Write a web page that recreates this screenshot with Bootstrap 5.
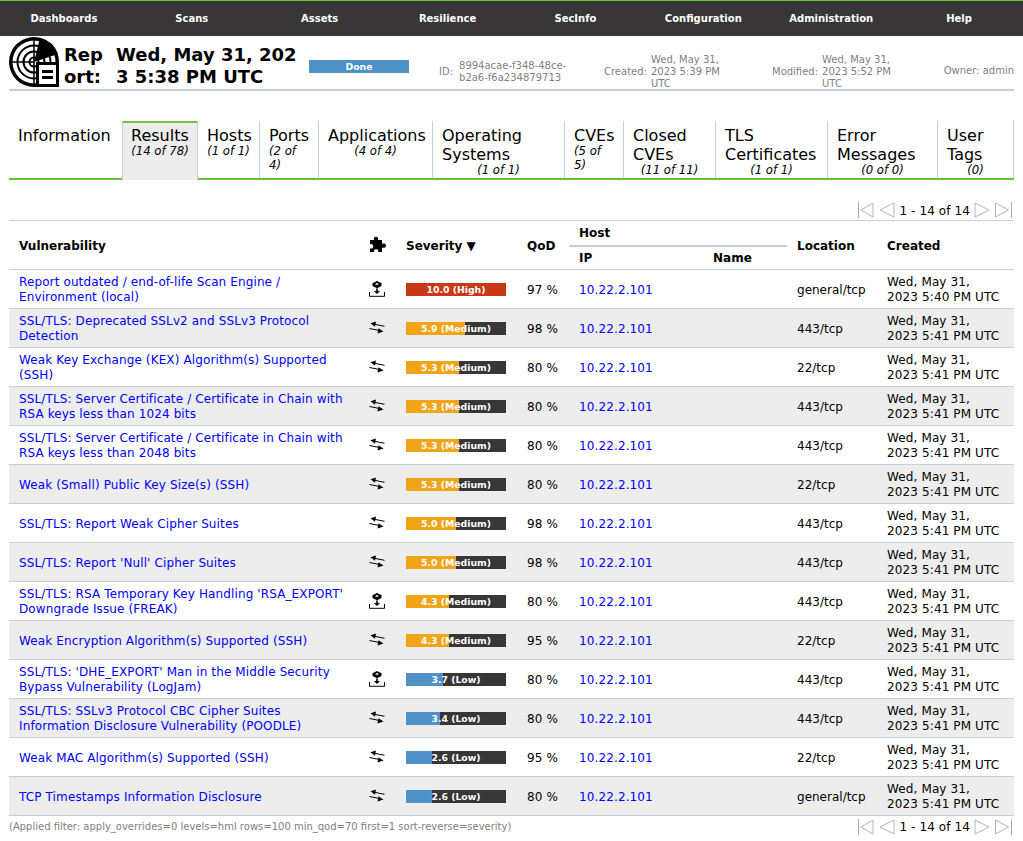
<!DOCTYPE html>
<html lang="en">
<head>
<meta charset="utf-8">
<title>Report</title>
<link href="https://cdn.jsdelivr.net/npm/bootstrap@5.3.0/dist/css/bootstrap.min.css" rel="stylesheet">
<style>
body{font-family:"DejaVu Sans",Verdana,sans-serif;font-size:12px;line-height:15px;color:#000;background:#fff;margin:0}
a{color:#00f;text-decoration:none}
.topbar{background:#393637;border-top:1px solid #66c430;height:36px}
.topbar a{flex:1 1 0;text-align:center;color:#fff;font-weight:700;font-size:10px;line-height:35px}
.page{padding:0 9px}
.headrow{height:55px;border-bottom:2px solid #c5d0d8}
.radar{width:50px;height:50px;flex:none;margin:1px 5px 0 0;display:block}
.ttl{font-size:18px;line-height:22px;font-weight:700;padding-top:8px}
.ttl-a{width:52px}.ttl-b{width:193px}
.donebar{width:100px;height:13px;margin-top:24px;background:#4f91c7;color:#fff;font-weight:700;font-size:9.3px;line-height:13px;text-align:center}
.meta{color:#7f7f7f;font-size:10px;line-height:12px;margin-top:18px;height:36px;align-items:center}
.m-id{margin-left:30px;width:165px}
.m-lab{margin-right:4px;white-space:nowrap}
.m-lab-id{margin-right:6px}
.m-created{width:168px}
.m-mod{width:120px}
.m-date{width:76px}
.m-own{margin-left:auto;margin-top:17px}
.tabbar{margin-top:30px;border-bottom:2px solid #66c430;height:59px}
.tabi{padding:5px 9px 0;border-right:1px solid #c5d0d8;font-size:16px;line-height:19px;color:#000}
.tabi small{display:block;font-size:11.7px;line-height:14px;margin-top:-1px;font-style:italic;text-align:center;color:#000}
.tabi small.lft{text-align:left}
.tabi.on{background:#ededed;border-top:2px solid #7ac143;border-left:1px solid #c5d0d8;margin-bottom:-2px;padding:3px 8px 0}
.t1{width:113px;border-right:0}
.t2{width:76px}.t3{width:62px}.t4{width:59px}.t5{width:114px}.t6{width:132px}.t7{width:59px}.t8{width:92px}.t9{width:112px}.t10{width:110px}.t11{width:76px}
.pager{height:40px;padding:20px 2px 0 0;gap:3px;line-height:20px}
.pager svg{display:block}
.pager span{letter-spacing:.1px;padding-top:1px}
.vt{table-layout:fixed;width:1005px;margin:0;--bs-table-bg:transparent;--bs-table-border-color:#c5d0d8;border-top:1px solid #c5d0d8}
.vt th,.vt td{padding:2px 0 0 10px;vertical-align:middle;font-size:12px;line-height:15px;border-bottom:1px solid #c5d0d8;color:#000;box-shadow:none}
.vt td{letter-spacing:.12px}
.vt td:first-child{padding-right:10px}
.vt td:last-child{padding-right:13px}
.vt td:nth-child(7){letter-spacing:0}
.vt tbody td{height:39px}
.vt thead th{height:24px;font-weight:700}
.vt thead tr:first-child .hosth{border-bottom:2px solid #c5d0d8;height:25px}
.vt tbody tr:nth-child(even) td{background:#ededed}
.vt td a{color:#00f}
.c-v{width:350px}.c-i{width:37px}.c-s{width:121px}.c-q{width:52px}.c-ip{width:134px}.c-n{width:84px}.c-l{width:90px}.c-c{width:137px}
.vt th.ic,.vt td.ic{padding:0 0 0 10px}
.vt td.sevc{padding-top:0}
.ic svg{display:block}
.sev{position:relative;width:100px;height:13px;background:#393637;color:#fff;font-weight:700;font-size:9.3px;line-height:13px;text-align:center;letter-spacing:0}
.sev i{position:absolute;left:0;top:0;bottom:0;display:block}
.sev b{position:relative;font-weight:700}
.hi{background:#c83814}.me{background:#f0a519}.lo{background:#4f91c7}
.footrow{height:20px}
.filt{color:#7f7f7f;font-size:10px;line-height:22px;white-space:nowrap}
.footrow .pager{height:20px;padding-top:1px}
</style>
</head>
<body>
<svg width="0" height="0" class="position-absolute">
<defs>
<symbol id="i-inst" viewBox="0 0 16 16"><path d="M8 0 12.500 2.200V5L8 7.200 3.500 5V2.200Z" fill="#000"/><path d="M8 2 10 3 8 4 6 3Z" fill="#fff"/><path d="M7.200 7.500h1.600v2.500h2.200L8 13 5 10h2.200Z" fill="#000"/><path d="M.5 11v4.300h15V11" fill="none" stroke="#000"/></symbol>
<symbol id="i-sw" viewBox="0 0 16 16"><path d="M5 4.200 15.500 6.300" fill="none" stroke="#000"/><path d="M1.500 3.200 7 1.500 6 6.800Z" fill="#000"/><path d="M.5 8.500 11 10.600" fill="none" stroke="#000"/><path d="M14.500 11.500 9.500 8.200 8.500 13.500Z" fill="#000"/></symbol>
<symbol id="p-first" viewBox="0 0 18 18"><path d="M1.500 1v16" stroke="#aaa" fill="none"/><path d="M16 2 4 9l12 7z" fill="#fff" stroke="#b5b5b5"/></symbol>
<symbol id="p-prev" viewBox="0 0 18 18"><path d="M16 2 2 9l14 7z" fill="#fff" stroke="#b5b5b5"/></symbol>
<symbol id="p-next" viewBox="0 0 18 18"><path d="M2 2l14 7-14 7z" fill="#fff" stroke="#b5b5b5"/></symbol>
<symbol id="p-last" viewBox="0 0 18 18"><path d="M1.500 2l13 7-13 7z" fill="#fff" stroke="#b5b5b5"/><path d="M17.500 1v16" stroke="#aaa" fill="none"/></symbol>
</defs>
</svg>

<nav class="topbar d-flex">
<a href="#">Dashboards</a><a href="#">Scans</a><a href="#">Assets</a><a href="#">Resilience</a><a href="#">SecInfo</a><a href="#">Configuration</a><a href="#">Administration</a><a href="#">Help</a>
</nav>

<div class="page">
<div class="headrow d-flex">
<svg class="radar" viewBox="0 0 50 50">
<circle cx="25" cy="25" r="25" fill="#000"/>
<circle cx="25" cy="25" r="21.500" fill="#fff"/>
<circle cx="25" cy="25" r="16.500" fill="none" stroke="#000" stroke-width="2"/>
<circle cx="25" cy="25" r="10.500" fill="none" stroke="#000" stroke-width="2"/>
<circle cx="25" cy="25" r="4.500" fill="none" stroke="#000" stroke-width="2"/>
<path d="M25 3v44M3 25h22" stroke="#000" stroke-width="1.500"/>
<path d="M25 25 31 1A25 25 0 0 1 49 17Z" fill="#000"/>
<rect x="27" y="25" width="23" height="25" fill="#000"/>
<rect x="30" y="28" width="17" height="19" fill="#fff"/>
<rect x="33" y="33" width="11" height="3" fill="#000"/>
<rect x="33" y="39" width="11" height="3" fill="#000"/>
</svg>
<div class="ttl ttl-a">Rep<br>ort:</div>
<div class="ttl ttl-b">Wed, May 31, 202<br>3 5:38 PM UTC</div>
<div class="donebar">Done</div>
<div class="meta m-id d-flex"><span class="m-lab m-lab-id">ID:</span><span>8994acae-f348-48ce-<br>b2a6-f6a234879713</span></div>
<div class="meta m-created d-flex"><span class="m-lab">Created:</span><span class="m-date">Wed, May 31,<br>2023 5:39 PM<br>UTC</span></div>
<div class="meta m-mod d-flex"><span class="m-lab">Modified:</span><span class="m-date">Wed, May 31,<br>2023 5:52 PM<br>UTC</span></div>
<div class="meta m-own d-flex">Owner: admin</div>
</div>

<div class="tabbar d-flex">
<a class="tabi t1">Information</a>
<a class="tabi t2 on">Results<small>(14 of 78)</small></a>
<a class="tabi t3">Hosts<small>(1 of 1)</small></a>
<a class="tabi t4">Ports<small class="lft">(2 of<br>4)</small></a>
<a class="tabi t5">Applications<small>(4 of 4)</small></a>
<a class="tabi t6">Operating Systems<small>(1 of 1)</small></a>
<a class="tabi t7">CVEs<small class="lft">(5 of<br>5)</small></a>
<a class="tabi t8">Closed CVEs<small>(11 of 11)</small></a>
<a class="tabi t9">TLS Certificates<small>(1 of 1)</small></a>
<a class="tabi t10">Error Messages<small>(0 of 0)</small></a>
<a class="tabi t11">User Tags<small>(0)</small></a>
</div>

<div class="pager d-flex justify-content-end align-items-center">
<svg width="18" height="18"><use href="#p-first"/></svg><svg width="18" height="18"><use href="#p-prev"/></svg><span>1 - 14 of 14</span><svg width="18" height="18"><use href="#p-next"/></svg><svg width="18" height="18"><use href="#p-last"/></svg>
</div>

<table class="table vt">
<colgroup><col class="c-v"><col class="c-i"><col class="c-s"><col class="c-q"><col class="c-ip"><col class="c-n"><col class="c-l"><col class="c-c"></colgroup>
<thead>
<tr><th rowspan="2">Vulnerability</th>
<th rowspan="2" class="ic"><svg width="18" height="18" viewBox="0 0 18 18"><path d="M1 4h4.200C4.500 2.500 5 .7 7 .7s2.500 1.800 1.800 3.300H13v4c1.500-.8 4-.4 4 1.700s-2.500 2.500-4 1.700V16H9c.7-1.500.2-2.800-1.800-2.800S4.600 14.500 5.300 16H1v-3.800c1.500.7 3.200.3 3.200-1.800S2.500 7.600 1 8.300Z" fill="#000"/></svg></th>
<th rowspan="2">Severity ▼</th><th rowspan="2">QoD</th><th colspan="2" class="hosth">Host</th><th rowspan="2">Location</th><th rowspan="2">Created</th></tr>
<tr><th>IP</th><th>Name</th></tr>
</thead>
<tbody>
<tr><td><a href="#">Report outdated / end-of-life Scan Engine / Environment (local)</a></td><td class="ic"><svg width="16" height="16"><use href="#i-inst"/></svg></td><td class="sevc"><div class="sev"><i class="hi" style="width:100%"></i><b>10.0 (High)</b></div></td><td>97 %</td><td><a href="#">10.22.2.101</a></td><td></td><td>general/tcp</td><td>Wed, May 31, 2023 5:40 PM UTC</td></tr>
<tr><td><a href="#">SSL/TLS: Deprecated SSLv2 and SSLv3 Protocol Detection</a></td><td class="ic"><svg width="16" height="16"><use href="#i-sw"/></svg></td><td class="sevc"><div class="sev"><i class="me" style="width:59%"></i><b>5.9 (Medium)</b></div></td><td>98 %</td><td><a href="#">10.22.2.101</a></td><td></td><td>443/tcp</td><td>Wed, May 31, 2023 5:41 PM UTC</td></tr>
<tr><td><a href="#">Weak Key Exchange (KEX) Algorithm(s) Supported (SSH)</a></td><td class="ic"><svg width="16" height="16"><use href="#i-sw"/></svg></td><td class="sevc"><div class="sev"><i class="me" style="width:53%"></i><b>5.3 (Medium)</b></div></td><td>80 %</td><td><a href="#">10.22.2.101</a></td><td></td><td>22/tcp</td><td>Wed, May 31, 2023 5:41 PM UTC</td></tr>
<tr><td><a href="#">SSL/TLS: Server Certificate / Certificate in Chain with RSA keys less than 1024 bits</a></td><td class="ic"><svg width="16" height="16"><use href="#i-sw"/></svg></td><td class="sevc"><div class="sev"><i class="me" style="width:53%"></i><b>5.3 (Medium)</b></div></td><td>80 %</td><td><a href="#">10.22.2.101</a></td><td></td><td>443/tcp</td><td>Wed, May 31, 2023 5:41 PM UTC</td></tr>
<tr><td><a href="#">SSL/TLS: Server Certificate / Certificate in Chain with RSA keys less than 2048 bits</a></td><td class="ic"><svg width="16" height="16"><use href="#i-sw"/></svg></td><td class="sevc"><div class="sev"><i class="me" style="width:53%"></i><b>5.3 (Medium)</b></div></td><td>80 %</td><td><a href="#">10.22.2.101</a></td><td></td><td>443/tcp</td><td>Wed, May 31, 2023 5:41 PM UTC</td></tr>
<tr><td><a href="#">Weak (Small) Public Key Size(s) (SSH)</a></td><td class="ic"><svg width="16" height="16"><use href="#i-sw"/></svg></td><td class="sevc"><div class="sev"><i class="me" style="width:53%"></i><b>5.3 (Medium)</b></div></td><td>80 %</td><td><a href="#">10.22.2.101</a></td><td></td><td>22/tcp</td><td>Wed, May 31, 2023 5:41 PM UTC</td></tr>
<tr><td><a href="#">SSL/TLS: Report Weak Cipher Suites</a></td><td class="ic"><svg width="16" height="16"><use href="#i-sw"/></svg></td><td class="sevc"><div class="sev"><i class="me" style="width:50%"></i><b>5.0 (Medium)</b></div></td><td>98 %</td><td><a href="#">10.22.2.101</a></td><td></td><td>443/tcp</td><td>Wed, May 31, 2023 5:41 PM UTC</td></tr>
<tr><td><a href="#">SSL/TLS: Report 'Null' Cipher Suites</a></td><td class="ic"><svg width="16" height="16"><use href="#i-sw"/></svg></td><td class="sevc"><div class="sev"><i class="me" style="width:50%"></i><b>5.0 (Medium)</b></div></td><td>98 %</td><td><a href="#">10.22.2.101</a></td><td></td><td>443/tcp</td><td>Wed, May 31, 2023 5:41 PM UTC</td></tr>
<tr><td><a href="#">SSL/TLS: RSA Temporary Key Handling 'RSA_EXPORT' Downgrade Issue (FREAK)</a></td><td class="ic"><svg width="16" height="16"><use href="#i-inst"/></svg></td><td class="sevc"><div class="sev"><i class="me" style="width:43%"></i><b>4.3 (Medium)</b></div></td><td>80 %</td><td><a href="#">10.22.2.101</a></td><td></td><td>443/tcp</td><td>Wed, May 31, 2023 5:41 PM UTC</td></tr>
<tr><td><a href="#">Weak Encryption Algorithm(s) Supported (SSH)</a></td><td class="ic"><svg width="16" height="16"><use href="#i-sw"/></svg></td><td class="sevc"><div class="sev"><i class="me" style="width:43%"></i><b>4.3 (Medium)</b></div></td><td>95 %</td><td><a href="#">10.22.2.101</a></td><td></td><td>22/tcp</td><td>Wed, May 31, 2023 5:41 PM UTC</td></tr>
<tr><td><a href="#">SSL/TLS: 'DHE_EXPORT' Man in the Middle Security Bypass Vulnerability (LogJam)</a></td><td class="ic"><svg width="16" height="16"><use href="#i-inst"/></svg></td><td class="sevc"><div class="sev"><i class="lo" style="width:37%"></i><b>3.7 (Low)</b></div></td><td>80 %</td><td><a href="#">10.22.2.101</a></td><td></td><td>443/tcp</td><td>Wed, May 31, 2023 5:41 PM UTC</td></tr>
<tr><td><a href="#">SSL/TLS: SSLv3 Protocol CBC Cipher Suites Information Disclosure Vulnerability (POODLE)</a></td><td class="ic"><svg width="16" height="16"><use href="#i-sw"/></svg></td><td class="sevc"><div class="sev"><i class="lo" style="width:34%"></i><b>3.4 (Low)</b></div></td><td>80 %</td><td><a href="#">10.22.2.101</a></td><td></td><td>443/tcp</td><td>Wed, May 31, 2023 5:41 PM UTC</td></tr>
<tr><td><a href="#">Weak MAC Algorithm(s) Supported (SSH)</a></td><td class="ic"><svg width="16" height="16"><use href="#i-sw"/></svg></td><td class="sevc"><div class="sev"><i class="lo" style="width:26%"></i><b>2.6 (Low)</b></div></td><td>95 %</td><td><a href="#">10.22.2.101</a></td><td></td><td>22/tcp</td><td>Wed, May 31, 2023 5:41 PM UTC</td></tr>
<tr><td><a href="#">TCP Timestamps Information Disclosure</a></td><td class="ic"><svg width="16" height="16"><use href="#i-sw"/></svg></td><td class="sevc"><div class="sev"><i class="lo" style="width:26%"></i><b>2.6 (Low)</b></div></td><td>80 %</td><td><a href="#">10.22.2.101</a></td><td></td><td>general/tcp</td><td>Wed, May 31, 2023 5:41 PM UTC</td></tr>
</tbody>
</table>

<div class="footrow d-flex justify-content-between">
<div class="filt">(Applied filter: apply_overrides=0 levels=hml rows=100 min_qod=70 first=1 sort-reverse=severity)</div>
<div class="pager d-flex justify-content-end align-items-center">
<svg width="18" height="18"><use href="#p-first"/></svg><svg width="18" height="18"><use href="#p-prev"/></svg><span>1 - 14 of 14</span><svg width="18" height="18"><use href="#p-next"/></svg><svg width="18" height="18"><use href="#p-last"/></svg>
</div>
</div>
</div>
<script src="https://cdn.jsdelivr.net/npm/bootstrap@5.3.0/dist/js/bootstrap.bundle.min.js"></script>
</body>
</html>
